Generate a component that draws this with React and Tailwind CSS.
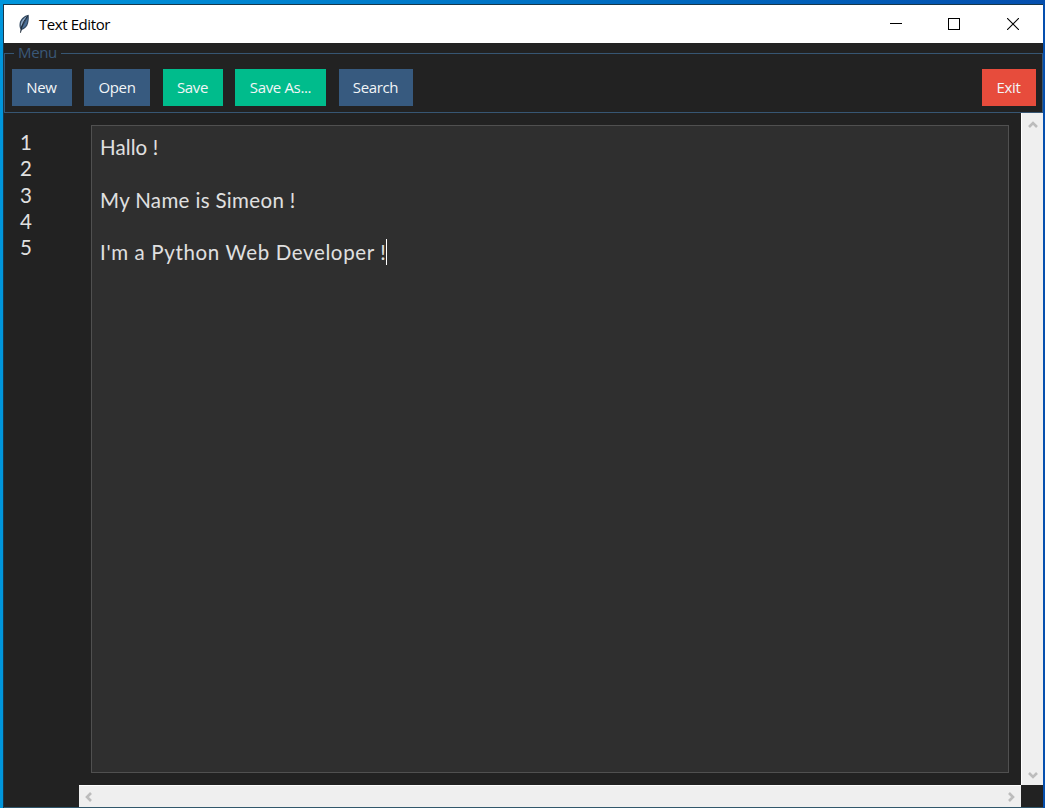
import React from "react";

const LINES = [
  { text: "Hallo !", spacing: "tracking-[0.1px]" },
  { text: "", spacing: "" },
  { text: "My Name is Simeon !", spacing: "tracking-[0.35px]" },
  { text: "", spacing: "" },
  { text: "I'm a Python Web Developer !", spacing: "tracking-[0.64px]" },
];

const BUTTONS = [
  { label: "New", style: "w-[60px] bg-[#375a7f]" },
  { label: "Open", style: "w-[66px] bg-[#375a7f]" },
  { label: "Save", style: "w-[60px] bg-[#00bc8c]" },
  { label: "Save As...", style: "w-[91px] bg-[#00bc8c]" },
  { label: "Search", style: "w-[74px] bg-[#375a7f]" },
];

function MenuButton({ label, style }) {
  return (
    <button
      className={`h-[36.5px] shrink-0 whitespace-nowrap text-center text-[15px] leading-9 tracking-[-0.35px] text-[#f2f5f7] ${style}`}
    >
      {label}
    </button>
  );
}

function Chevron({ points }) {
  return (
    <svg width="12" height="12" viewBox="0 0 12 12" fill="none">
      <polyline points={points} stroke="#bcbcbc" strokeWidth="2.6" />
    </svg>
  );
}

function Feather() {
  return (
    <svg width="14" height="22" viewBox="0 0 14 22">
      <path d="M11.6 1.8C7.2 2.6 3.2 6.4 2.6 10.4c-.3 2.3 0 4.4 1.1 6L3.4 20l1.3-3c3-1 5.6-3.3 6.4-6.8.7-3 .9-5.6.5-8.4Z" fill="#30475f" />
      <path d="M10.3 3C7 4.7 4.5 7.4 3.8 10.7l-.1 3.3 3.3-5.2L10.3 3Z" fill="#8fabc9" />
      <path d="M10.8 4.3 6.6 12l-1.6 3.6c2.8-1.2 4.3-3 5-5.6.6-2 .8-3.8.8-5.7Z" fill="#4d7098" />
      <path d="M10.8 2.6 6.5 9 4.5 14.6 3.5 19.8" fill="none" stroke="#17202a" strokeWidth=".8" />
    </svg>
  );
}

function TitleBar() {
  return (
    <header className="flex h-[38px] shrink-0 items-center bg-white pl-[13px] text-black">
      <Feather />
      <span className="ml-2 -mt-px whitespace-nowrap text-[15px] leading-5 tracking-[-0.42px]">Text Editor</span>
      <div className="ml-auto flex items-center pr-[24px]">
        <svg className="mr-[46px]" width="12" height="12" viewBox="0 0 12 12" shapeRendering="crispEdges"><path d="M0 5.5h12" stroke="black" /></svg>
        <svg className="mr-[47px]" width="12" height="12" viewBox="0 0 12 12" shapeRendering="crispEdges"><path d="M.5.5h11v11H.5Z" fill="none" stroke="black" /></svg>
        <svg width="12" height="12" viewBox="0 0 12 12"><path d="m0 0 12 12M12 0 0 12" stroke="black" strokeWidth="1.1" /></svg>
      </div>
    </header>
  );
}

export default function App() {
  return (
    <div className="flex h-[808px] w-[1045px] flex-col overflow-hidden bg-linear-to-r from-[#0096dc] to-[#054fae] pt-[4px] pr-[2px] pl-[3px] font-['Open_Sans','Noto_Sans',sans-serif]">
      <div className="flex min-h-0 flex-1 flex-col border-t border-l border-[#17374a] bg-[#222222]">
        <TitleBar />
        <fieldset className="h-[70px] min-w-0 shrink-0 border border-[#375673]">
          <legend className="ml-[9px] h-[21px] px-1 text-[15px] leading-[19px] tracking-[-0.35px] text-[#3a5878]">Menu</legend>
          <div className="flex gap-x-[12.5px] pt-[5px] pr-[6.5px] pl-[6.5px]">
            {BUTTONS.map((b) => <MenuButton key={b.label} {...b} />)}
            <div className="ml-auto">
              <MenuButton label="Exit" style="w-[54px] bg-[#e74c3c]" />
            </div>
          </div>
        </fieldset>
        <div className="flex min-h-0 flex-1">
          <div className="flex min-w-0 flex-1 flex-col">
            <main className="flex h-[672px] shrink-0 pr-3 pb-3 pt-3 font-[Lato,sans-serif] text-[20.5px] leading-[26.3px] text-[#e0e0e0]">
              <div className="w-[87px] shrink-0 pl-[16px] pt-[4px]">
                {LINES.map((_, i) => <div key={i} className="h-[26.3px]">{i + 1}</div>)}
              </div>
              <div className="min-w-0 flex-1 border border-[#505050] bg-[#2f2f2f] pt-[8px] pl-[8px]">
                {LINES.map((line, i) => (
                  <div key={i} className="flex h-[26.3px] whitespace-pre">
                    <span className={line.spacing}>{line.text}</span>
                    {i === LINES.length - 1 && <i className="block h-[26px] w-px bg-white" />}
                  </div>
                ))}
              </div>
            </main>
            <div className="ml-[75px] flex h-[22px] items-center justify-between border-t border-white bg-[#efefef] px-1">
              <Chevron points="8,2 4,6 8,10" />
              <Chevron points="4,2 8,6 4,10" />
            </div>
            <div className="h-px bg-[#31576b]" />
          </div>
          <div className="flex w-[22px] shrink-0 flex-col">
            <div className="flex h-[672px] shrink-0 flex-col items-center justify-between border-l border-white bg-[#efefef] pt-[6px] pb-[4px]">
              <Chevron points="2,8 6,4 10,8" />
              <Chevron points="2,4 6,8 10,4" />
            </div>
            <div className="mt-auto h-px bg-[#31576b]" />
          </div>
        </div>
      </div>
    </div>
  );
}
